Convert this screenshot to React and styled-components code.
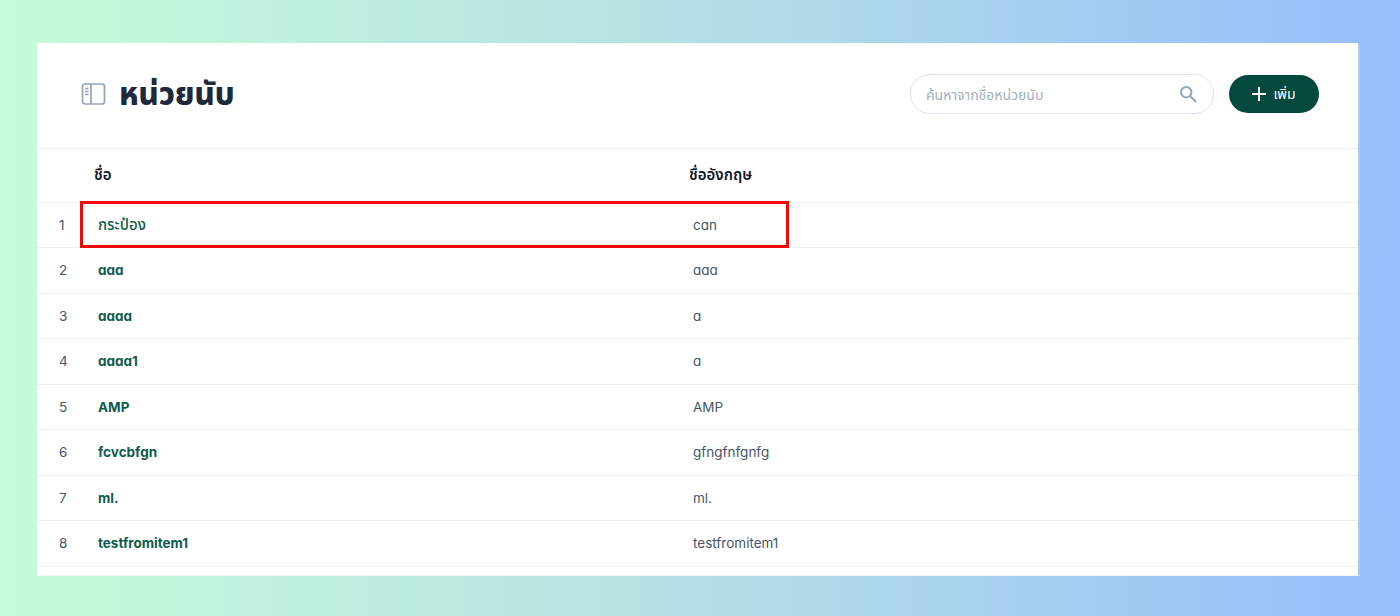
import React from 'react';
import styled, { createGlobalStyle } from 'styled-components';

const units = [
  { name: 'กระป๋อง', english: 'can' },
  { name: 'aaa', english: 'aaa' },
  { name: 'aaaa', english: 'a' },
  { name: 'aaaa1', english: 'a' },
  { name: 'AMP', english: 'AMP' },
  { name: 'fcvcbfgn', english: 'gfngfnfgnfg' },
  { name: 'ml.', english: 'ml.' },
  { name: 'testfromitem1', english: 'testfromitem1' },
];

const GlobalStyle = createGlobalStyle`
  html, body {
    margin: 0;
    padding: 0;
    height: 616px;
    overflow: hidden;
  }
  body {
    font-family: Inter, "Noto Sans", "Noto Sans Thai", "DejaVu Sans", sans-serif;
    font-feature-settings: "cv11" 1;
  }
`;

const Page = styled.div`
  box-sizing: border-box;
  width: 1400px;
  height: 616px;
  padding: 43px 40px 40px 37px;
  background: linear-gradient(90deg, #c6fbd9 0%, #b5e3e3 45%, #97bdfb 100%);
`;

const Card = styled.main`
  position: relative;
  box-sizing: border-box;
  height: 533px;
  background: #fff;
  border-right: 2px solid #bcc5d2;
  border-bottom: 1px solid #f4f6fa;
  overflow: hidden;
`;

const Header = styled.header`
  box-sizing: border-box;
  height: 105px;
  display: flex;
  align-items: center;
  padding: 0 39px 4px 44px;
`;

const TitleIcon = styled.svg`
  width: 25px;
  height: 24px;
  color: #94a3b8;
  margin-right: 13px;
`;

const Title = styled.h1`
  flex: 1;
  margin: 0;
  font-size: 31px;
  line-height: 40px;
  font-weight: 800;
  color: #1e293b;
`;

const SearchBox = styled.div`
  box-sizing: border-box;
  width: 304px;
  height: 40px;
  display: flex;
  align-items: center;
  justify-content: space-between;
  padding: 0 16px 0 15px;
  margin-right: 15px;
  border: 1.5px solid #dbe2ec;
  border-radius: 20px;
  background: #fff;
`;

const SearchText = styled.span`
  padding-top: 3px;
  font-size: 14px;
  color: #a3afc0;
`;

const AddButton = styled.button`
  width: 90px;
  height: 38px;
  display: flex;
  align-items: center;
  justify-content: center;
  gap: 7px;
  padding: 0;
  border: none;
  border-radius: 19px;
  background: #05483d;
  color: #fff;
  font-family: inherit;
  font-size: 14px;
  font-weight: 400;
`;

const ButtonLabel = styled.span`
  padding-top: 2px;
`;

const Row = styled.div`
  box-sizing: border-box;
  height: ${(p) => (p.$head ? '53.5px' : '45.5px')};
  display: grid;
  grid-template-columns: 61px 595px 1fr;
  align-items: center;
  border-top: 1.5px solid #edf0f6;
  font-size: 13.5px;
`;

const Index = styled.span`
  padding-left: 22px;
  color: #475569;
`;

const HeadCell = styled.span`
  font-size: 15px;
  font-weight: 600;
  color: #0f172a;
  margin-left: -4px;
`;

const NameCell = styled.span`
  padding-top: ${(p) => (p.$thai ? '2px' : '0')};
  font-size: ${(p) => (p.$thai ? '15px' : '13.5px')};
  font-weight: ${(p) => (p.$thai ? 500 : 700)};
  color: #0f5c4c;
`;

const EnglishCell = styled.span`
  color: #475569;
`;

const Highlight = styled.div`
  position: absolute;
  left: 43px;
  top: 158px;
  width: 709px;
  height: 47px;
  box-sizing: border-box;
  border: 3px solid #f00a0a;
  pointer-events: none;
`;

export default function App() {
  return (
    <Page>
      <GlobalStyle />
      <Card>
        <Header>
          <TitleIcon viewBox="0 0 25 24" fill="none" stroke="currentColor" strokeWidth="1.7">
            <rect x="1.5" y="2" width="22" height="20" rx="2.5" />
            <path d="M10 2v20" />
            <path d="M4 6.5h3.5M4 9.5h3.5M4 12.5h3.5" />
          </TitleIcon>
          <Title>หน่วยนับ</Title>
          <SearchBox>
            <SearchText>ค้นหาจากชื่อหน่วยนับ</SearchText>
            <svg width="18" height="18" viewBox="0 0 18 18" fill="none" stroke="#94a3b8" strokeWidth="2">
              <circle cx="7.2" cy="7.2" r="5.2" />
              <path d="M11 11l6 6" />
            </svg>
          </SearchBox>
          <AddButton>
            <svg width="14" height="14" viewBox="0 0 14 14" stroke="#fff" strokeWidth="2">
              <path d="M7 0v14M0 7h14" />
            </svg>
            <ButtonLabel>เพิ่ม</ButtonLabel>
          </AddButton>
        </Header>
        <Row $head>
          <span />
          <HeadCell>ชื่อ</HeadCell>
          <HeadCell>ชื่ออังกฤษ</HeadCell>
        </Row>
        {units.map((unit, i) => (
          <Row key={unit.name}>
            <Index>{i + 1}</Index>
            <NameCell $thai={i === 0}>{unit.name}</NameCell>
            <EnglishCell>{unit.english}</EnglishCell>
          </Row>
        ))}
        <Row />
        <Highlight />
      </Card>
    </Page>
  );
}
